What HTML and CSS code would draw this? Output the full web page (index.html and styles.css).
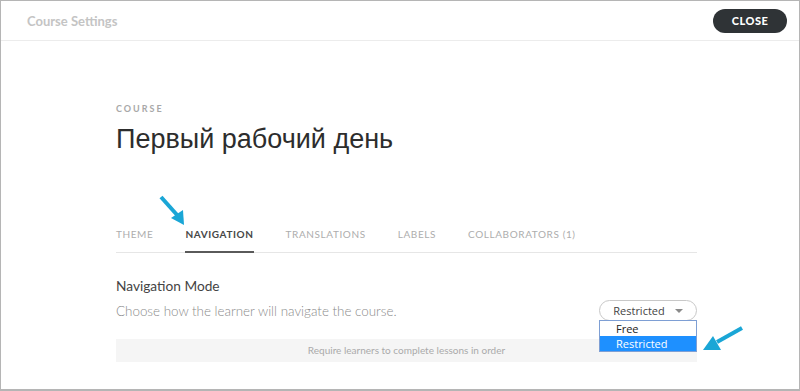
FILE: index.html
```html
<!DOCTYPE html>
<html>
<head>
	<title>Course Settings</title>
	<link rel="stylesheet" href="styles.css">
</head>
<body>

<div class="settingsFrame">
	<div class="settingsHeader">
		<span class="settingsTitle">Course Settings</span>
		<button type="button" class="settingsClose">CLOSE</button>
	</div>

	<div class="settingsBody">
		<p class="courseLabel">COURSE</p>
		<h1 class="courseName">Первый рабочий день</h1>

		<ul class="settingsTabs">
			<li>Theme</li>
			<li class="tabActive">Navigation</li>
			<li>Translations</li>
			<li>Labels</li>
			<li>Collaborators (1)</li>
		</ul>

		<div class="navRow">
			<div>
				<h3 class="navHeading">Navigation Mode</h3>
				<p class="navHint">Choose how the learner will navigate the course.</p>
			</div>
			<div class="navSelect">
				<span>Restricted</span><i class="navCaret"></i>
				<ul class="navOptions">
					<li>Free</li>
					<li class="optionActive">Restricted</li>
				</ul>
			</div>
		</div>

		<div class="navNote">Require learners to complete lessons in order</div>
	</div>

	<svg class="pointer pointerTab" width="32" height="34" viewBox="0 0 32 34">
		<path d="M3 3 L20 22" stroke="#1aa6d6" stroke-width="4" fill="none"/>
		<path d="M13 24 L26 31 L25 16 Z" fill="#1aa6d6"/>
	</svg>
	<svg class="pointer pointerOption" width="44" height="28" viewBox="0 0 44 28">
		<path d="M41 3 L16 17" stroke="#1aa6d6" stroke-width="4" fill="none"/>
		<path d="M2 25 L20 25 L12 11 Z" fill="#1aa6d6"/>
	</svg>
</div>

</body>
</html>
```

FILE: styles.css
```css
html, body {margin: 0; padding: 0;}

body {
	font-family: Lato, "Open Sans", Arial, sans-serif;
	background: #fff;
}

.settingsFrame {
	position: relative;
	box-sizing: border-box;
	width: 800px;
	height: 391px;
	border: 1px solid #b5b5b5;
	border-bottom-width: 2px;
	overflow: hidden;
}

.settingsHeader {
	display: flex;
	align-items: center;
	justify-content: space-between;
	height: 39px;
	padding: 0 12px 0 26px;
	border-bottom: 1px solid #ececec;
}

.settingsTitle {font-size: 13px; font-weight: bold; color: #c4c4c4;}

.settingsClose {
	height: 24px;
	width: 74px;
	border: none;
	border-radius: 12px;
	background: #2f3336;
	color: #fff;
	font-family: Lato, Arial, sans-serif;
	font-size: 11px;
	font-weight: 900;
	letter-spacing: 0.5px;
}

.settingsBody {width: 581px; padding: 62px 0 0 115px;}

.courseLabel {
	margin: 0;
	font-size: 9px;
	font-weight: bold;
	letter-spacing: 2px;
	color: #a8a8a8;
	line-height: 12px;
}

.courseName {
	margin: 8px 0 0 0;
	font-family: "Liberation Sans", Arial, sans-serif;
	font-size: 27px;
	font-weight: normal;
	color: #2d2d2d;
	line-height: 32px;
}

.settingsTabs {
	display: flex;
	gap: 32px;
	list-style-type: none;
	margin: 72px 0 0 0;
	padding: 0;
	border-bottom: 1px solid #e6e6e6;
}

.settingsTabs li {
	font-size: 10px;
	text-transform: uppercase;
	letter-spacing: 0.6px;
	color: #adadad;
	padding: 0 0 10px 0;
	line-height: 14px;
	border-bottom: 2px solid transparent;
	margin-bottom: -1px;
}

.settingsTabs li.tabActive {color: #474747; font-weight: bold; border-bottom-color: #5a5a5a;}

.navRow {display: flex; justify-content: space-between; align-items: flex-end; margin-top: 24px;}

.navHeading {margin: 0; font-size: 13.7px; font-weight: normal; color: #444; line-height: 18px;}

.navHint {margin: 7px 0 0 0; font-size: 13.4px; font-weight: 300; color: #8a8a8a; line-height: 18px;}

.navSelect {
	position: relative;
	box-sizing: border-box;
	width: 98px;
	height: 21px;
	border: 1px solid #c8c8c8;
	border-radius: 11px;
	display: flex;
	align-items: center;
	justify-content: center;
	gap: 10px;
	font-size: 11px;
	color: #444;
	font-family: "Open Sans", "DejaVu Sans", sans-serif;
	margin-bottom: -1px;
}

.navCaret {
	width: 0;
	height: 0;
	border-left: 4px solid transparent;
	border-right: 4px solid transparent;
	border-top: 4px solid #8a8a8a;
	margin-top: 1px;
}

.navOptions {
	position: absolute;
	top: 19px;
	left: -1px;
	width: 98px;
	box-sizing: border-box;
	margin: 0;
	padding: 0;
	list-style-type: none;
	border: 1px solid #7e9fd4;
	background: #fff;
	z-index: 5;
}

.navOptions li {height: 15px; line-height: 15px; padding-left: 16px; font-size: 11px; color: #222;}
.navOptions li.optionActive {background: #1e90ff; color: #fff;}

.navNote {
	margin-top: 19px;
	height: 23px;
	line-height: 23px;
	background: #f5f5f5;
	text-align: center;
	font-size: 10px;
	color: #aaa;
}

.pointer {position: absolute;}
.pointerTab {left: 157px; top: 193px;}
.pointerOption {left: 700px; top: 324px;}
```
